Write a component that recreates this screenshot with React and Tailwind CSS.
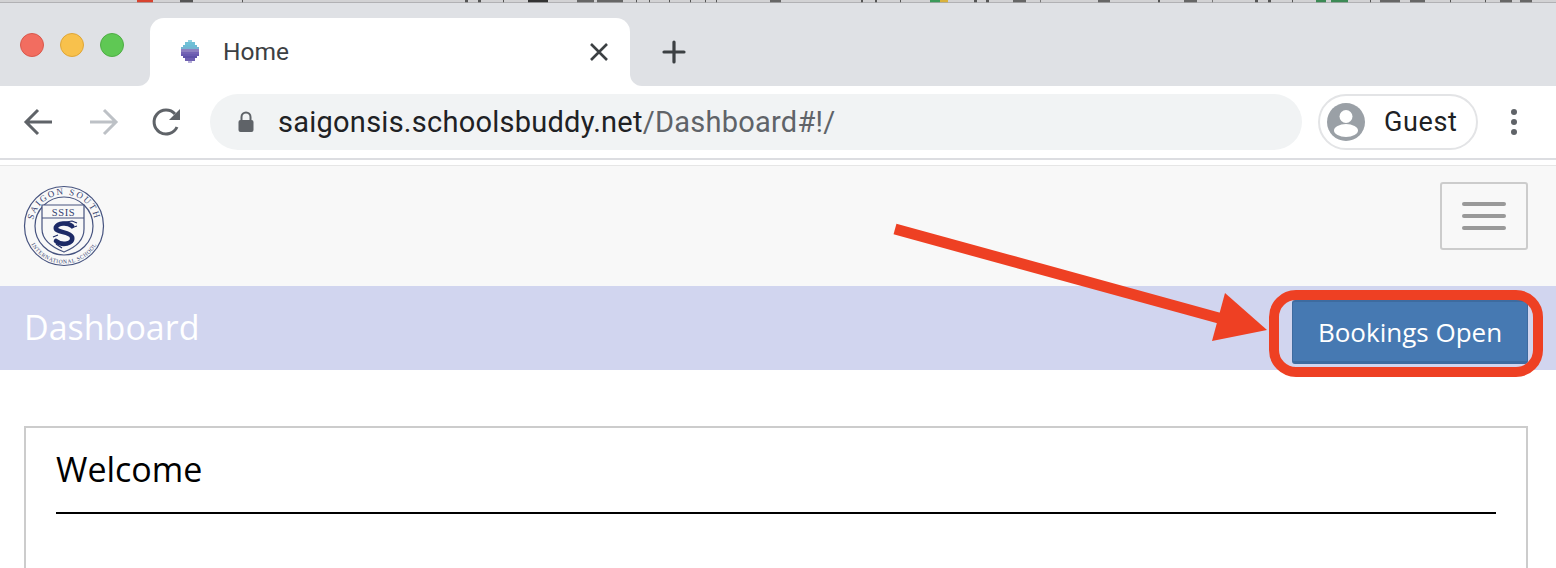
import React from "react";

const sans = "font-['Open_Sans',sans-serif]";
const ui = "font-['Roboto','Liberation_Sans',sans-serif]";

const stripMarks = [
  [137, 16, "#d8432f"], [180, 13, "#555"], [242, 1, "#555"], [465, 3, "#555"], [478, 3, "#555"],
  [503, 1, "#555"], [528, 20, "#333"], [577, 17, "#666"], [597, 26, "#666"], [636, 1, "#555"],
  [649, 1, "#555"], [669, 1, "#555"], [690, 1, "#555"], [705, 1, "#555"], [716, 1, "#555"],
  [770, 11, "#666"], [861, 2, "#555"], [875, 2, "#555"], [900, 1, "#555"], [930, 10, "#3c9a5a"],
  [940, 8, "#d9b23c"], [974, 3, "#555"], [986, 3, "#555"], [1013, 13, "#666"], [1040, 1, "#777"],
  [1098, 12, "#666"], [1158, 2, "#555"], [1184, 13, "#666"], [1212, 1, "#777"], [1255, 3, "#555"],
  [1268, 3, "#555"], [1292, 1, "#555"], [1316, 10, "#3c8a55"], [1331, 17, "#3c8a55"], [1370, 1, "#555"],
  [1380, 20, "#666"], [1410, 15, "#666"], [1450, 1, "#555"], [1485, 1, "#555"], [1500, 12, "#666"],
  [1520, 12, "#666"],
];

function BehindWindow() {
  return (
    <svg width="1556" height="3" viewBox="0 0 1556 3" className="block shrink-0">
      <rect width="1556" height="3" fill="#d2d2d4" />
      {stripMarks.map(([x, w, c]) => (
        <rect key={x} x={x} y="0" width={w} height="3" fill={c} />
      ))}
      <rect y="2" width="1556" height="1" fill="#a9a9ab" opacity="0.8" />
    </svg>
  );
}

function Logo() {
  return (
    <svg width="82" height="82" viewBox="0 0 82 82" fill="none">
      <defs>
        <path id="topArc" d="M9.5 41a31.5 31.5 0 0 1 63 0" />
        <path id="botArc" d="M3.5 41a37.5 37.5 0 0 0 75 0" />
      </defs>
      <circle cx="41" cy="41" r="39.5" stroke="#46537f" strokeWidth="1.2" />
      <circle cx="41" cy="41" r="29" stroke="#46537f" strokeWidth="1.2" />
      <text fill="#34406f" fontSize="9" fontFamily="Liberation Serif, serif" letterSpacing="1.7">
        <textPath href="#topArc" startOffset="50%" textAnchor="middle">SAIGON SOUTH</textPath>
      </text>
      <text fill="#34406f" fontSize="5.6" fontFamily="Liberation Serif, serif" letterSpacing="0.55">
        <textPath href="#botArc" startOffset="50%" textAnchor="middle">INTERNATIONAL SCHOOL</textPath>
      </text>
      <path d="M19 20H61V44C61 56 51 63 41 67C31 63 19 56 19 44Z" fill="#f8f8f8" stroke="#46537f" strokeWidth="1.2" />
      <path d="M19 33H61" stroke="#46537f" strokeWidth="1.2" />
      <text x="40.5" y="30.5" textAnchor="middle" fill="#34406f" fontSize="10.5" fontFamily="Liberation Serif, serif" letterSpacing="0.6">SSIS</text>
      <path d="M49 41C44 37 35 38 33 42C31 48 47 46 49 52C51 59 39 61 33 56" stroke="#1d2a66" strokeWidth="4.6" strokeLinecap="round" />
      <path d="M37 38L49 36L54 38M48 43L54 41M30 52L35 50M33 59L39 63" stroke="#1d2a66" strokeWidth="1.2" />
    </svg>
  );
}

function Favicon() {
  const rows = [
    [8, 4, "#8fd0e0"],
    [5, 10, "#6fc0d6"],
    [3, 14, "#6cbcd4"],
    [1, 18, "#74b4d2"],
    [1, 18, "#8d80c0"],
    [1, 18, "#7464b4"],
    [1, 18, "#6a5cb0"],
    [3, 14, "#5f52a8"],
    [5, 10, "#6e60b0"],
    [8, 4, "#b8b0da"],
  ];
  return (
    <svg width="20" height="23" viewBox="0 0 20 23" className="shrink-0" shapeRendering="crispEdges">
      {rows.map(([x, w, c], i) => (
        <rect key={i} x={x} y={i * 2.3} width={w} height="2.3" fill={c} />
      ))}
    </svg>
  );
}

function Lights() {
  return (
    <div className="flex gap-[16px] pl-5 pt-[15px]">
      <span className="size-[24px] rounded-full bg-[#f26d60] border border-[#d9584c]" />
      <span className="size-[24px] rounded-full bg-[#f8c14c] border border-[#dfa637]" />
      <span className="size-[24px] rounded-full bg-[#5fc854] border border-[#4fad45]" />
    </div>
  );
}

function NavIcon({ color, d }) {
  return (
    <svg width="32" height="32" viewBox="0 0 32 32" fill="none" stroke={color} strokeWidth="3" className="shrink-0">
      <path d={d} />
    </svg>
  );
}

export default function App() {
  return (
    <div className={`relative w-[1556px] h-[568px] overflow-hidden bg-white ${sans}`}>
      {/* Tab strip */}
      <div className="h-[86px] bg-[#dfe1e5] flex flex-col">
        <BehindWindow />
        <div className="flex flex-1 mt-[15px]">
          <div className="w-[150px]">
            <Lights />
          </div>
          <div className="relative w-[480px] bg-white rounded-t-[14px] flex items-center pl-[30px] pr-[22px] pb-[1px]">
            <span className="absolute -left-3 bottom-0 size-3 bg-white" />
            <span className="absolute -left-3 bottom-0 size-3 bg-[#dfe1e5] rounded-br-[12px]" />
            <span className="absolute -right-3 bottom-0 size-3 bg-white" />
            <span className="absolute -right-3 bottom-0 size-3 bg-[#dfe1e5] rounded-bl-[12px]" />
            <Favicon />
            <span className={`ml-[23px] pt-[2px] text-[24.5px] leading-none text-[#3c4043] ${ui}`}>Home</span>
            <svg width="18" height="18" viewBox="0 0 18 18" className="ml-auto" stroke="#3c4043" strokeWidth="2.6" fill="none">
              <path d="M1 1L17 17M17 1L1 17" />
            </svg>
          </div>
          <div className="flex items-center pl-[32px] pb-[1px]">
            <svg width="24" height="24" viewBox="0 0 24 24" stroke="#3c4043" strokeWidth="3.2" fill="none" strokeLinecap="round">
              <path d="M12 2V22M2 12H22" />
            </svg>
          </div>
        </div>
      </div>

      {/* Toolbar */}
      <div className="h-[72px] bg-white flex items-center pl-[22px] pr-[26px] pb-[1px]">
        <NavIcon color="#5f6368" d="M30 16H4M16 4L4 16L16 28" />
        <div className="w-[34px]" />
        <NavIcon color="#bdc1c6" d="M2 16H28M16 4L28 16L16 28" />
        <div className="w-[31px]" />
        <svg width="32" height="32" viewBox="0 0 32 32" fill="none" className="shrink-0">
          <path d="M26 21A12 12 0 1 1 24 8" stroke="#5f6368" strokeWidth="3" />
          <path d="M29 3V14H18Z" fill="#5f6368" />
        </svg>
        <div className="ml-[27px] w-[1092px] h-[56px] rounded-full bg-[#f1f3f4] flex items-center pl-[27px]">
          <svg width="18" height="24" viewBox="0 0 18 24" className="shrink-0">
            <path d="M4.5 10V7a4.5 4.5 0 0 1 9 0v3" stroke="#5f6368" strokeWidth="2" fill="none" />
            <rect x="1.5" y="10" width="15" height="12" rx="2" fill="#5f6368" />
          </svg>
          <span className={`ml-[23px] pt-[2px] text-[29px] leading-none tracking-[0.25px] ${ui}`}>
            <span className="text-[#202124]">saigonsis.schoolsbuddy.net</span>
            <span className="text-[#5f6368]">/Dashboard#!/</span>
          </span>
        </div>
        <div className="ml-[16px] w-[160px] h-[56px] rounded-full border-2 border-[#e3e4e6] flex items-center pl-[7px]">
          <svg width="38" height="38" viewBox="0 0 38 38" className="shrink-0">
            <circle cx="19" cy="19" r="19" fill="#9aa0a6" />
            <circle cx="19" cy="13.5" r="6.5" fill="#fff" />
            <ellipse cx="19" cy="27.5" rx="12" ry="6.5" fill="#fff" />
          </svg>
          <span className={`ml-[19px] pt-[2px] text-[27px] leading-none tracking-[0.6px] text-[#202124] ${ui}`}>Guest</span>
        </div>
        <div className="ml-[33px] flex flex-col gap-[4px]">
          <span className="size-[6px] rounded-full bg-[#5f6368]" />
          <span className="size-[6px] rounded-full bg-[#5f6368]" />
          <span className="size-[6px] rounded-full bg-[#5f6368]" />
        </div>
      </div>

      {/* Browser edge */}
      <div className="h-[2px] bg-[#dcdde1]" />
      <div className="h-[5px] bg-white" />
      <div className="h-[1px] bg-[#e6e6e6]" />

      {/* Site navbar */}
      <div className="h-[120px] bg-[#f8f8f8] flex items-start justify-between pl-[23px] pr-[28px]">
        <div className="mt-[19px]">
          <Logo />
        </div>
        <div className="mt-[16px] w-[88px] h-[68px] rounded-[3px] border-2 border-[#cccccc] flex flex-col items-center justify-center gap-[8px]">
          <span className="w-[44px] h-[4px] rounded-full bg-[#999999]" />
          <span className="w-[44px] h-[4px] rounded-full bg-[#999999]" />
          <span className="w-[44px] h-[4px] rounded-full bg-[#999999]" />
        </div>
      </div>

      {/* Page band */}
      <div className="h-[84px] bg-[#d1d5ef] flex items-center justify-between pl-[24px] pr-[28px]">
        <span className="text-[34px] leading-none text-white pb-[2px]">Dashboard</span>
        <div className="w-[236px] h-[64px] mt-[8px] rounded-[3px] bg-[#4679b2] border border-[#3e6b9f] border-b-[3px] border-t-2 flex items-center justify-center">
          <span className="text-[26px] leading-none text-white">Bookings Open</span>
        </div>
      </div>

      {/* Content */}
      <div className="pl-[24px] pr-[28px] pt-[56px]">
        <div className="h-[300px] border-2 border-[#cccccc] px-[30px] pt-[18px]">
          <div className="text-[34px] leading-[46px] text-black pb-[20px] border-b-2 border-black">Welcome</div>
        </div>
      </div>

      {/* Annotation overlay */}
      <div className="absolute left-[1269px] top-[290px] w-[274px] h-[87px] rounded-[27px] border-[10px] border-[#ee4023]" />
      <svg className="absolute left-0 top-0 pointer-events-none" width="1556" height="568" fill="none">
        <path d="M895 229L1226 320" stroke="#ee4023" strokeWidth="11" />
        <path d="M1225 293L1267 330L1212 341Z" fill="#ee4023" />
      </svg>
    </div>
  );
}
